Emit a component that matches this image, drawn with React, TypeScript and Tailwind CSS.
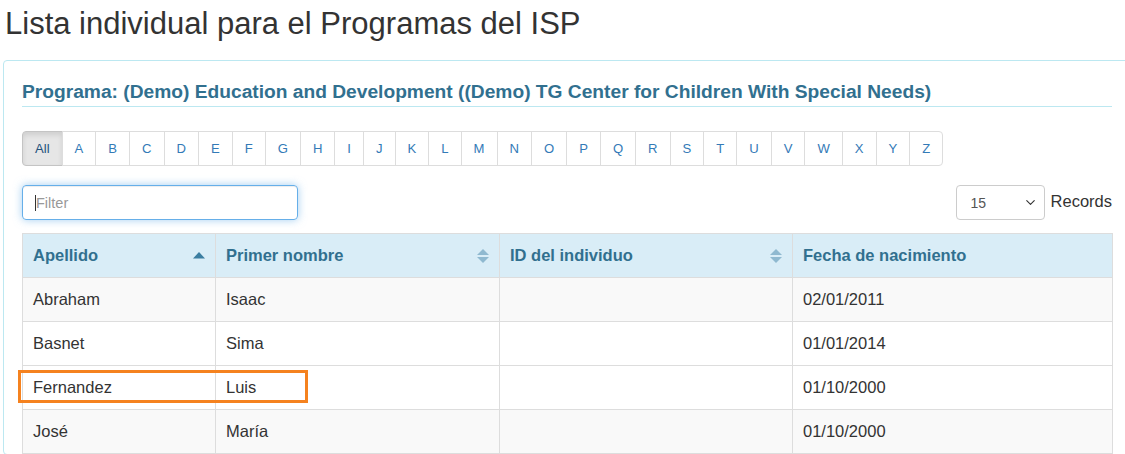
import { ChevronDown } from 'lucide-react';

const letters = ['All', 'A', 'B', 'C', 'D', 'E', 'F', 'G', 'H', 'I', 'J', 'K', 'L', 'M', 'N', 'O', 'P', 'Q', 'R', 'S', 'T', 'U', 'V', 'W', 'X', 'Y', 'Z'];

const rows = [
  { last: 'Abraham', first: 'Isaac', id: '', dob: '02/01/2011', bg: 'bg-[#f9f9f9]' },
  { last: 'Basnet', first: 'Sima', id: '', dob: '01/01/2014', bg: 'bg-white' },
  { last: 'Fernandez', first: 'Luis', id: '', dob: '01/10/2000', bg: 'bg-white' },
  { last: 'José', first: 'María', id: '', dob: '01/10/2000', bg: 'bg-[#f9f9f9]' },
];

function SortAsc() {
  return (
    <svg width="12" height="7" viewBox="0 0 12 7" className="shrink-0">
      <path d="M6 0 L12 6.5 L0 6.5 Z" fill="#3b7ea1" />
    </svg>
  );
}

function SortBoth() {
  return (
    <svg width="12" height="14" viewBox="0 0 12 14" className="shrink-0">
      <path d="M6 0 L12 6 L0 6 Z" fill="#8fb9d0" />
      <path d="M0 8 L12 8 L6 14 Z" fill="#8fb9d0" />
    </svg>
  );
}

export default function App() {
  return (
    <div className="w-[1125px] h-[454px] overflow-hidden bg-white font-['Liberation_Sans',Arial,sans-serif] text-[#333]">
      {/* Title */}
      <h1 className="pt-[7px] pl-[5px] text-[31px] leading-[34px] font-normal text-[#333]">
        Lista individual para el Programas del ISP
      </h1>

      {/* Panel */}
      <div className="mt-[19px] ml-[3px] w-[1128px] border border-[#bce8f1] rounded-[4px] pt-[20px] pl-[18px]">
        <div className="w-[1090px] border-b border-[#bce8f1] pb-[3px] text-[19.2px] leading-[22px] font-bold text-[#31708f]">
          Programa: (Demo) Education and Development ((Demo) TG Center for Children With Special Needs)
        </div>

        {/* Alphabet pager */}
        <div className="mt-[24px] flex">
          {letters.map((l, i) => (
            <div
              key={l}
              className={`h-[35px] px-3 flex items-center border text-[13.1px] ${i > 0 ? '-ml-px' : ''} ${
                i === 0
                  ? 'bg-[#e6e6e6] border-[#c4c4c4] rounded-l-[4px] text-[#23527c] shadow-[inset_0_3px_5px_rgba(0,0,0,0.1)]'
                  : 'bg-white border-[#ddd] text-[#337ab7]'
              } ${i === letters.length - 1 ? 'rounded-r-[4px]' : ''}`}
            >
              {l}
            </div>
          ))}
        </div>

        {/* Filter + records */}
        <div className="mt-[19px] w-[1090px] flex items-center justify-between">
          <div className="relative">
            <input
              type="text"
              placeholder="Filter"
              className="w-[276px] h-[35px] rounded-[4px] border border-[#66afe9] pl-[13px] text-[14.5px] placeholder-[#999] outline-none shadow-[inset_0_1px_1px_rgba(0,0,0,0.075),0_0_8px_rgba(102,175,233,0.6)]"
            />
            <span className="absolute left-[13px] top-[10px] w-px h-[16px] bg-[#333]" />
          </div>
          <div className="flex items-center">
            <div className="w-[89px] h-[35px] rounded-[4px] border border-[#ccc] flex items-center justify-between pl-[14px] pr-[6px] text-[14px] text-[#555]">
              <span className="mt-[2px]">15</span>
              <ChevronDown className="w-[15px] h-[15px] text-[#333]" strokeWidth={1.8} />
            </div>
            <span className="ml-[6px] text-[16.5px] -mt-[3px]">Records</span>
          </div>
        </div>

        {/* Table */}
        <div className="relative mt-[13px] w-[1090px]">
          <table className="w-[1090px] table-fixed border-collapse text-[16.5px]">
            <colgroup>
              <col className="w-[193px]" />
              <col className="w-[284px]" />
              <col className="w-[293px]" />
              <col className="w-[320px]" />
            </colgroup>
            <thead>
              <tr className="h-[44px] bg-[#d9edf7] text-[#31708f]">
                <th className="border border-[#ddd] px-[10px] text-left font-bold">
                  <div className="flex items-center justify-between">
                    <span>Apellido</span>
                    <SortAsc />
                  </div>
                </th>
                <th className="border border-[#ddd] px-[10px] text-left font-bold">
                  <div className="flex items-center justify-between">
                    <span>Primer nombre</span>
                    <SortBoth />
                  </div>
                </th>
                <th className="border border-[#ddd] px-[10px] text-left font-bold">
                  <div className="flex items-center justify-between">
                    <span>ID del individuo</span>
                    <SortBoth />
                  </div>
                </th>
                <th className="border border-[#ddd] px-[10px] text-left font-bold">Fecha de nacimiento</th>
              </tr>
            </thead>
            <tbody>
              {rows.map((r) => (
                <tr key={r.last} className={`h-[44px] ${r.bg}`}>
                  <td className="border border-[#ddd] px-[10px]">{r.last}</td>
                  <td className="border border-[#ddd] px-[10px]">{r.first}</td>
                  <td className="border border-[#ddd] px-[10px]">{r.id}</td>
                  <td className="border border-[#ddd] px-[10px]">{r.dob}</td>
                </tr>
              ))}
            </tbody>
          </table>

          {/* Highlight */}
          <div className="absolute left-[-4px] top-[137px] w-[290px] h-[33px] border-[3px] border-[#f5821f]" />
        </div>
      </div>
    </div>
  );
}
